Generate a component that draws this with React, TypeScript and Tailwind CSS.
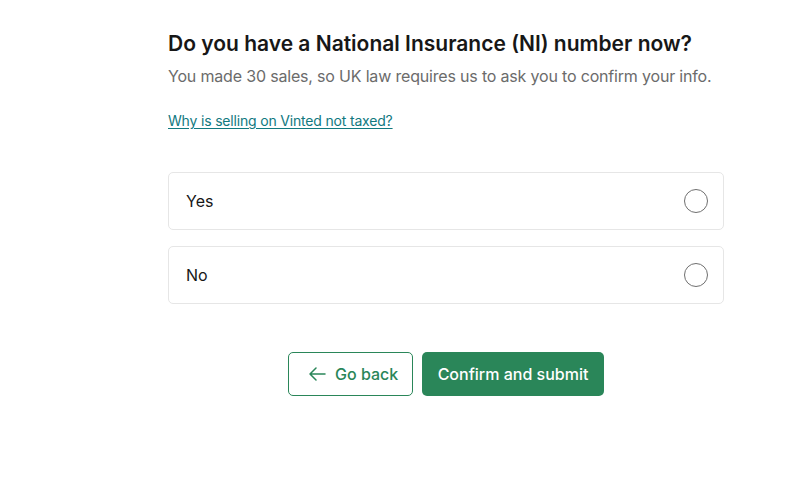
const options = ["Yes", "No"]

function OptionCard(props: { label: string }) {
  const { label } = props

  return <label className="h-[58px] pl-[17px] pr-[15px] flex items-center justify-between border border-[#e6e6e6] rounded-[5px] bg-white cursor-pointer">
    <span className="text-base text-[#171717]">
      {label}
    </span>
    <span className="w-6 h-6 rounded-full border border-[#6f6f6f]" />
  </label>
}

export default function App() {
  return <div className="min-h-[504px] w-full bg-white font-['Inter',sans-serif]">
    <div className="pl-[168px] pt-[30px]">
      <div className="w-[556px] flex flex-col">
        <h1 className="text-[21px] leading-7 font-semibold text-[#171717] whitespace-nowrap">
          {`Do you have a National Insurance (NI) number now?`}
        </h1>
        <p className="mt-[6px] text-base leading-6 text-[#6b6b6b] whitespace-nowrap tracking-[-0.18px]">
          {`You made 30 sales, so UK law requires us to ask you to confirm your info.`}
        </p>
        <a href="#" className="mt-[23px] self-start text-sm leading-5 text-[#11797f] underline underline-offset-2 tracking-[-0.18px]">
          {`Why is selling on Vinted not taxed?`}
        </a>
        <div className="mt-[41px] flex flex-col gap-4">
          {options.map(o =>
            <OptionCard key={o} label={o} />)}
        </div>
        <div className="mt-12 flex items-center justify-center gap-[9px]">
          <button className="h-11 w-[125px] pl-5 flex items-center gap-[9px] rounded-[5px] border border-[#2a8659] text-[#2a8659] text-base font-medium">
            <svg width="17" height="14" viewBox="0 0 17 14" fill="none" stroke="currentColor" strokeWidth="1.5" strokeLinecap="round" strokeLinejoin="round">
              <path d="M7 1 L1 7 L7 13 M1 7 H16" />
            </svg>
            {`Go back`}
          </button>
          <button className="h-11 w-[182px] rounded-[5px] bg-[#2a8659] text-white text-base font-medium">
            {`Confirm and submit`}
          </button>
        </div>
      </div>
    </div>
  </div>
}
